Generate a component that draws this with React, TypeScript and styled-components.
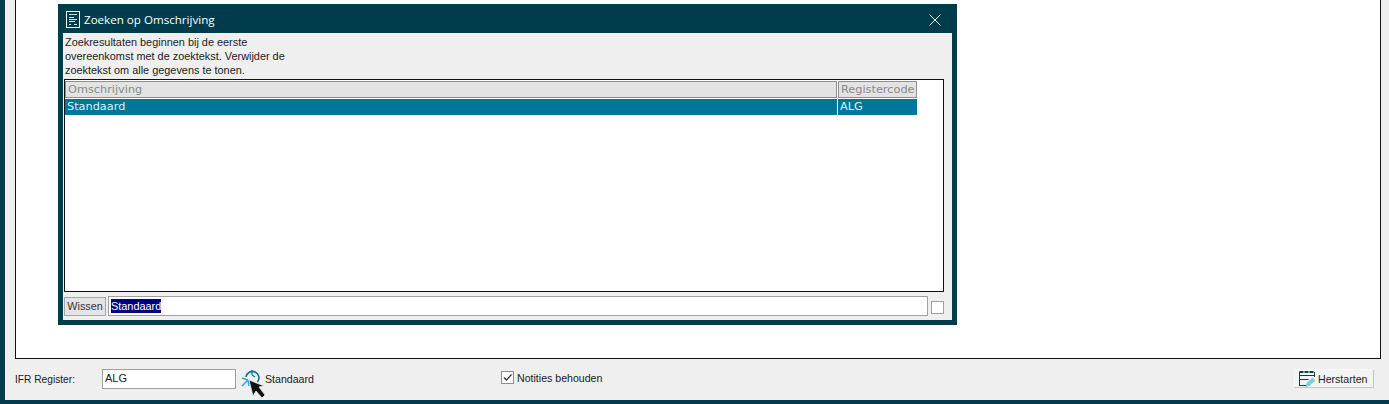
import styled, { createGlobalStyle } from "styled-components";

const Global = createGlobalStyle`
  html, body { margin: 0; padding: 0; height: 100%; overflow: hidden; }
  #root { height: 100%; }
`;

const Screen = styled.div`
  position: relative;
  width: 1389px;
  height: 404px;
  box-sizing: border-box;
  display: flex;
  flex-direction: column;
  background: #efefef;
  border-left: 5px solid #003c4c;
  border-bottom: 4px solid #003c4c;
  font-family: "Liberation Sans", Arial, sans-serif;
  font-size: 10.6px;
  color: #1a1a1a;
`;

const MainPanel = styled.div`
  flex: 1;
  margin: 0 8px 0 10px;
  background: #fff;
  border: 1px solid #111;
  border-top: none;
`;

const Footer = styled.div`
  height: 41px;
  box-sizing: border-box;
  display: flex;
  align-items: center;
  padding: 0 15px 2px 10px;
`;

const FieldLabel = styled.span`
  width: 87px;
  font-size: 10.2px;
  padding-top: 1px;
`;

const CodeInput = styled.div`
  width: 134px;
  height: 20px;
  box-sizing: border-box;
  background: #fff;
  border: 1px solid #a0a0a0;
  padding: 1px 2px;
  font-size: 11px;
  line-height: 14px;
`;

const LookupIcon = styled.svg`
  margin: 0 3px 0 6px;
  width: 20px;
  height: 20px;
  overflow: visible;
`;

const LookupText = styled.span`
  width: 236px;
  padding-top: 1px;
`;

const CheckWrap = styled.label`
  display: flex;
  align-items: center;
  gap: 3px;
  padding-bottom: 2px;
`;

const CheckBox = styled.span<{ $size: number }>`
  display: block;
  width: ${(p) => p.$size}px;
  height: ${(p) => p.$size}px;
  box-sizing: border-box;
  border: 1px solid #8f8f8f;
  background: #fff;
`;

const RestartButton = styled.div`
  margin-left: auto;
  width: 80px;
  height: 19px;
  box-sizing: border-box;
  display: flex;
  align-items: center;
  gap: 3px;
  padding-left: 4px;
  background: #f3f3f3;
  border-top: 1px solid #f8f8f8;
  border-left: 1px solid #f8f8f8;
  border-right: 1px solid #c4c4c4;
  border-bottom: 1px solid #c4c4c4;
`;

const Dialog = styled.div`
  position: absolute;
  left: 53px;
  top: 4px;
  width: 899px;
  height: 321px;
  box-sizing: border-box;
  display: flex;
  flex-direction: column;
  background: #003c4c;
  padding: 0 5px 5px;
`;

const TitleBar = styled.div`
  height: 29px;
  flex: none;
  box-sizing: border-box;
  padding: 2px 0 0 2px;
  display: flex;
  align-items: center;
  gap: 3px;
  color: #fff;
  font-family: "Open Sans", "Noto Sans", sans-serif;
  font-size: 11.6px;
`;

const CloseIcon = styled.svg`
  margin-left: auto;
  margin-right: 11px;
  width: 12px;
  height: 12px;
`;

const DialogBody = styled.div`
  flex: 1;
  min-height: 0;
  display: flex;
  flex-direction: column;
  background: #efefef;
`;

const Hint = styled.div`
  width: 240px;
  height: 46px;
  flex: none;
  box-sizing: border-box;
  padding: 2px 0 0 2px;
  font-size: 10.9px;
  line-height: 14px;
  color: #222;
`;

const Grid = styled.div`
  flex: 1;
  margin: 0 8px 0 1px;
  background: #fff;
  border: 1px solid #111;
  padding: 1px 0 0;
  font-family: "DejaVu Sans", Verdana, sans-serif;
  font-size: 11.3px;
`;

const GridRow = styled.div`
  display: grid;
  width: 852px;
  grid-template-columns: 772px 79px;
  column-gap: 1px;
  height: 18px;
`;

const HeaderCell = styled.div`
  box-sizing: border-box;
  height: 17px;
  line-height: 15px;
  padding-left: 2px;
  background: #e3e3e3;
  border: 1px solid #8e8e8e;
  color: #8a8a8a;
  overflow: hidden;
  white-space: nowrap;
`;

const DataRow = styled(GridRow)`
  height: 16px;
  background: #00769a;
  column-gap: 0;
  grid-template-columns: 772px 80px;
`;

const DataCell = styled.div<{ $divided?: boolean }>`
  box-sizing: border-box;
  line-height: 16px;
  padding-left: 2px;
  color: #d9f2fb;
  border-left: ${(p) => (p.$divided ? "1px solid #fff" : "none")};
`;

const SearchBar = styled.div`
  height: 28px;
  flex: none;
  display: flex;
  align-items: center;
  padding: 0 8px 0 1px;
`;

const ClearButton = styled.div`
  width: 42px;
  height: 19px;
  box-sizing: border-box;
  margin-right: 2px;
  text-align: center;
  line-height: 17px;
  font-size: 10.8px;
  background: #e4e4e4;
  border: 1px solid #a6a6a6;
  color: #333;
`;

const SearchInput = styled.div`
  width: 820px;
  height: 20px;
  box-sizing: border-box;
  background: #fff;
  border: 1px solid #a0a0a0;
  padding: 2px;
  font-size: 10.9px;
  line-height: 14px;
`;

const Selected = styled.span`
  display: inline-block;
  background: #000080;
  color: #fff;
`;

const SearchCheck = styled(CheckBox)`
  margin-left: auto;
  margin-top: 3px;
  border-color: #a0a0a0;
`;

export default function App() {
  return (
    <Screen>
      <Global />
      <MainPanel />
      <Footer>
        <FieldLabel>IFR Register:</FieldLabel>
        <CodeInput>ALG</CodeInput>
        <LookupIcon viewBox="0 0 20 20" fill="none">
          <path d="M4 8a6.5 6.5 0 1 1 11.5 5" stroke="#0b6f94" strokeWidth="1.6" />
          <path d="M6 11L0 9M6 11l-6 6M6 11l1 6" stroke="#2aa7dc" strokeWidth="1.5" />
          <path d="M10 1v5M10 6l3 2" stroke="#0b6f94" strokeWidth="1.2" />
          <path d="M7 11l4 16 3-5 6 7 3-3-6-8 5-1z" fill="#111" stroke="#e8e8e8" strokeWidth="0.8" />
        </LookupIcon>
        <LookupText>Standaard</LookupText>
        <CheckWrap>
          <CheckBox $size={13}>
            <svg width="11" height="11" viewBox="0 0 11 11" fill="none" style={{ display: "block" }}>
              <path d="M2 5.5l2.5 2.5L9.5 2.5" stroke="#333" strokeWidth="1.3" />
            </svg>
          </CheckBox>
          Notities behouden
        </CheckWrap>
        <RestartButton>
          <svg width="16" height="16" viewBox="0 0 16 16" fill="none">
            <path d="M.5 1h15" stroke="#0d3f4f" strokeWidth="2" strokeDasharray="4 1" />
            <path d="M.5 4.5h15M.5 8.5h9M.5 14.5h7M.5 1v14M15.5 1v5" stroke="#0d3f4f" />
            <path d="M7 15.5l1-3.5 5.5-5 2.5 2.5-5.5 5z" fill="#7fd3dc" stroke="#5dbcc8" strokeWidth="0.6" />
          </svg>
          Herstarten
        </RestartButton>
      </Footer>

      <Dialog>
        <TitleBar>
          <svg width="16" height="17" viewBox="0 0 16 17" fill="none">
            <rect x="1.5" y="0.5" width="13" height="16" fill="#003c4c" stroke="#fff" />
            <path d="M4 3.5h8M4 6.5h5M4 8.5h8M4 10.5h6M4 13.5h2M9 13.5h3" stroke="#d5e3e6" />
          </svg>
          Zoeken op Omschrijving
          <CloseIcon viewBox="0 0 12 12" fill="none">
            <path d="M.5.5l11 11M11.5.5l-11 11" stroke="#e8eef0" />
          </CloseIcon>
        </TitleBar>
        <DialogBody>
          <Hint>
            Zoekresultaten beginnen bij de eerste
            <br />
            overeenkomst met de zoektekst. Verwijder de
            <br />
            zoektekst om alle gegevens te tonen.
          </Hint>
          <Grid>
            <GridRow>
              <HeaderCell>Omschrijving</HeaderCell>
              <HeaderCell>Registercode</HeaderCell>
            </GridRow>
            <DataRow>
              <DataCell>Standaard</DataCell>
              <DataCell $divided>ALG</DataCell>
            </DataRow>
          </Grid>
          <SearchBar>
            <ClearButton>Wissen</ClearButton>
            <SearchInput>
              <Selected>Standaard</Selected>
            </SearchInput>
            <SearchCheck $size={13} />
          </SearchBar>
        </DialogBody>
      </Dialog>
    </Screen>
  );
}
